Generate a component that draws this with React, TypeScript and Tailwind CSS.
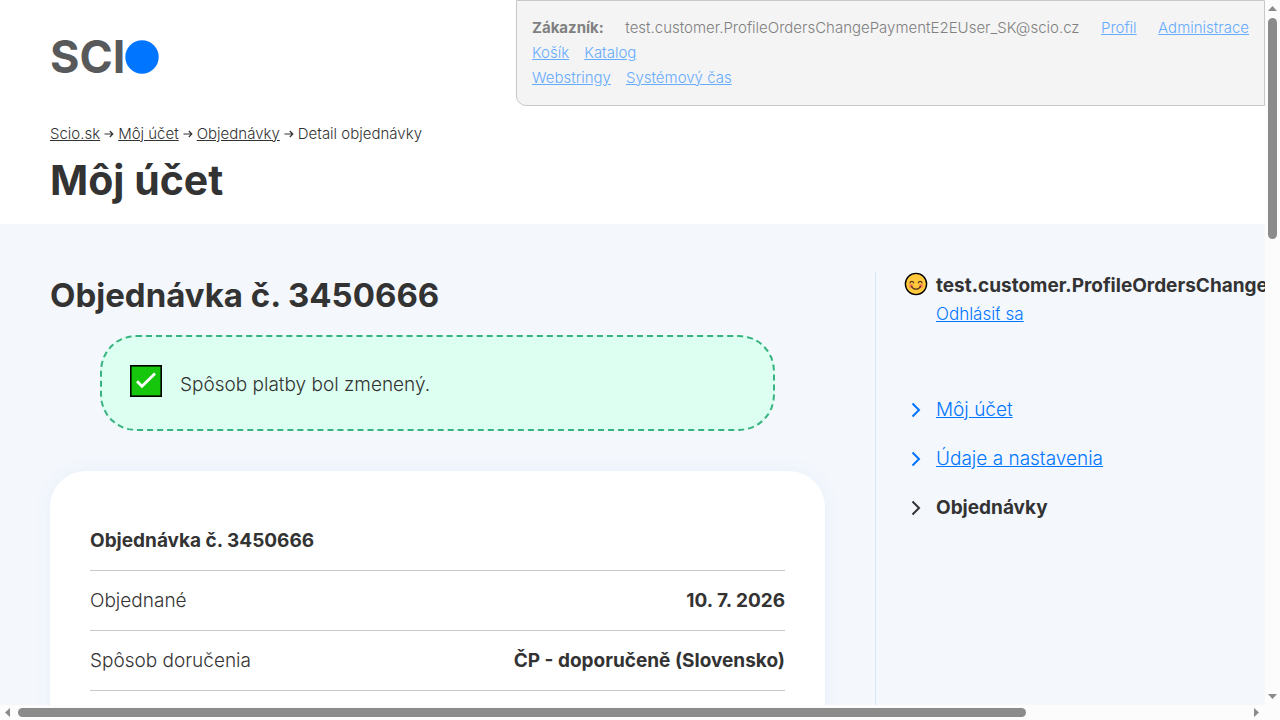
import React from "react";

const breadcrumbs = ["Scio.sk", "Môj účet", "Objednávky"];

const rows = [
    { label: "Objednané", value: "10. 7. 2026" },
    { label: "Spôsob doručenia", value: "ČP - doporučeně (Slovensko)" },
];

const menu = [
    { label: "Môj účet", active: false },
    { label: "Údaje a nastavenia", active: false },
    { label: "Objednávky", active: true },
];

function Logo() {
    return (
        <a href="#" aria-label="Scio" className="flex h-[34px] items-center">
            <span className="text-[45px] leading-[34px] font-bold text-[#58595b]">SCI</span>
            <svg width="34" height="34" viewBox="0 0 34 34">
                <circle cx="17" cy="17" r="16.7" fill="#0075ff" />
            </svg>
        </a>
    );
}

function AdminBar() {
    const link = "text-[#66acff] underline";
    return (
        <div className="w-[749px] rounded-bl-[10px] border border-[#c8c8c8] bg-[#f4f4f4] px-[15px] pt-[14px] pb-[15px] text-[15px] leading-[25px] font-light whitespace-nowrap text-[#808080]">
            <div className="flex justify-between">
                <strong className="font-bold">Zákazník:</strong>
                <span>test.customer.ProfileOrdersChangePaymentE2EUser_SK@scio.cz</span>
                <a href="#" className={link}>Profil</a>
                <a href="#" className={link}>Administrace</a>
            </div>
            <div className="flex gap-[15px]">
                <a href="#" className={link}>Košík</a>
                <a href="#" className={link}>Katalog</a>
            </div>
            <div className="flex gap-[15px]">
                <a href="#" className={link}>Webstringy</a>
                <a href="#" className={link}>Systémový čas</a>
            </div>
        </div>
    );
}

function Arrow() {
    return (
        <svg width="10" height="10" viewBox="0 0 10 10" fill="none" stroke="#333" strokeWidth="1.2">
            <path d="M0.5 5h8M5.8 2l3 3-3 3" />
        </svg>
    );
}

function Smile() {
    return (
        <svg width="24" height="24" viewBox="0 0 24 24" fill="none" className="shrink-0">
            <circle cx="12" cy="12" r="10.6" fill="#ffc83d" stroke="#000" strokeWidth="1.4" />
            <circle cx="7" cy="14" r="2.2" fill="#ff8a4f" />
            <circle cx="17" cy="14" r="2.2" fill="#ff8a4f" />
            <path d="M6 10.8c.6-2 3-2 3.6 0M14.4 10.8c.6-2 3-2 3.6 0M7.5 14.2c1.8 4 7.2 4 9 0" stroke="#5a3a1c" strokeWidth="1.3" strokeLinecap="round" />
        </svg>
    );
}

function Check() {
    return (
        <svg width="32" height="32" viewBox="0 0 32 32" fill="none" className="shrink-0">
            <rect x="0.8" y="0.8" width="30.4" height="30.4" fill="#16c60c" stroke="#000" strokeWidth="1.6" />
            <path d="M7 16.2l5 5L25 8.5" stroke="#fff" strokeWidth="2.8" />
        </svg>
    );
}

function Chevron() {
    return (
        <svg width="10" height="16" viewBox="0 0 10 16" fill="none" stroke="currentColor" strokeWidth="2">
            <path d="M1.5 1.5L8 8l-6.5 6.5" />
        </svg>
    );
}

function Triangle({ points }: { points: string }) {
    return (
        <svg width="9" height="9" viewBox="0 0 9 9" fill="#8b8b8b" className="shrink-0">
            <polygon points={points} />
        </svg>
    );
}

export default function App() {
    return (
        <div className="flex h-screen flex-col overflow-hidden bg-[#fcfcfc] font-['Inter',sans-serif] font-light text-[#333]">
            <div className="flex min-h-0 flex-1">
                <div className="flex min-w-0 flex-1 flex-col overflow-hidden bg-[#f4f8fd]">
                    <header className="bg-white pb-5">
                        <div className="flex items-start justify-between pl-[50px]">
                            <div className="pt-10">
                                <Logo />
                            </div>
                            <AdminBar />
                        </div>
                        <nav className="flex items-center gap-1 px-[50px] pt-4 text-[15px] leading-6">
                            {breadcrumbs.map((item) => (
                                <React.Fragment key={item}>
                                    <a href="#" className="underline">{item}</a>
                                    <Arrow />
                                </React.Fragment>
                            ))}
                            <span>Detail objednávky</span>
                        </nav>
                        <h1 className="px-[50px] pt-[10px] text-[41px] leading-[48px] font-bold">Môj účet</h1>
                    </header>

                    <div className="flex flex-1 pt-12">
                        <main className="min-w-0 flex-1 px-[50px] pt-[2px]">
                            <h2 className="text-[33px] leading-[42px] font-bold">Objednávka č. 3450666</h2>
                            <div className="mx-[50px] mt-[19px] flex h-24 items-start gap-[18px] rounded-[36px] border-2 border-dashed border-[#36b37e] bg-[#dcfff1] px-7 pt-7 text-[19px] leading-[40px]">
                                <Check />
                                <p>Spôsob platby bol zmenený.</p>
                            </div>
                            <section className="mt-10 rounded-[36px] bg-white px-10 pt-10 pb-20 text-[19px] leading-[29px] shadow-[0_0_20px_rgba(0,80,200,0.05)]">
                                <table className="w-full">
                                    <thead>
                                        <tr className="border-b border-[#c8c8c8]">
                                            <th colSpan={2} className="py-[15px] text-left font-bold">Objednávka č. 3450666</th>
                                        </tr>
                                    </thead>
                                    <tbody>
                                        {rows.map((row) => (
                                            <tr key={row.label} className="border-b border-[#c8c8c8]">
                                                <td className="py-[15px]">{row.label}</td>
                                                <td className="py-[15px] text-right font-bold">{row.value}</td>
                                            </tr>
                                        ))}
                                    </tbody>
                                </table>
                            </section>
                        </main>

                        <aside className="w-[390px] shrink-0 border-l border-[#dbe6f5] pl-7">
                            <div className="flex gap-2 whitespace-nowrap">
                                <Smile />
                                <div>
                                    <p className="text-[19px] leading-7 font-bold">test.customer.ProfileOrdersChangePaymentE2EUser_SK@scio.cz</p>
                                    <a href="#" className="block pt-[2px] text-[17px] leading-6 text-[#0075ff] underline">Odhlásiť sa</a>
                                </div>
                            </div>
                            <ul className="mt-[69px] flex flex-col gap-5 pl-[7px] text-[19px] leading-[29px]">
                                {menu.map((item) => (
                                    <li key={item.label}>
                                        <a
                                            href="#"
                                            className={item.active
                                                ? "flex items-center gap-[15px] font-bold"
                                                : "flex items-center gap-[15px] text-[#0075ff] underline"}
                                        >
                                            <Chevron />
                                            {item.label}
                                        </a>
                                    </li>
                                ))}
                            </ul>
                        </aside>
                    </div>
                </div>

                <div className="flex w-[15px] shrink-0 flex-col items-center justify-between py-1">
                    <Triangle points="0,7 4.5,2 9,7" />
                    <div className="my-[5px] flex-1">
                        <div className="h-[33%] w-[9px] rounded-full bg-[#8b8b8b]"></div>
                    </div>
                    <Triangle points="0,2 9,2 4.5,7" />
                </div>
            </div>

            <div className="mr-[15px] flex h-[15px] shrink-0 items-center px-1">
                <Triangle points="6,0 1,4.5 6,9" />
                <div className="mx-[5px] flex-1">
                    <div className="h-[9px] w-[82%] rounded-full bg-[#8b8b8b]"></div>
                </div>
                <Triangle points="2,0 7,4.5 2,9" />
            </div>
        </div>
    );
}
